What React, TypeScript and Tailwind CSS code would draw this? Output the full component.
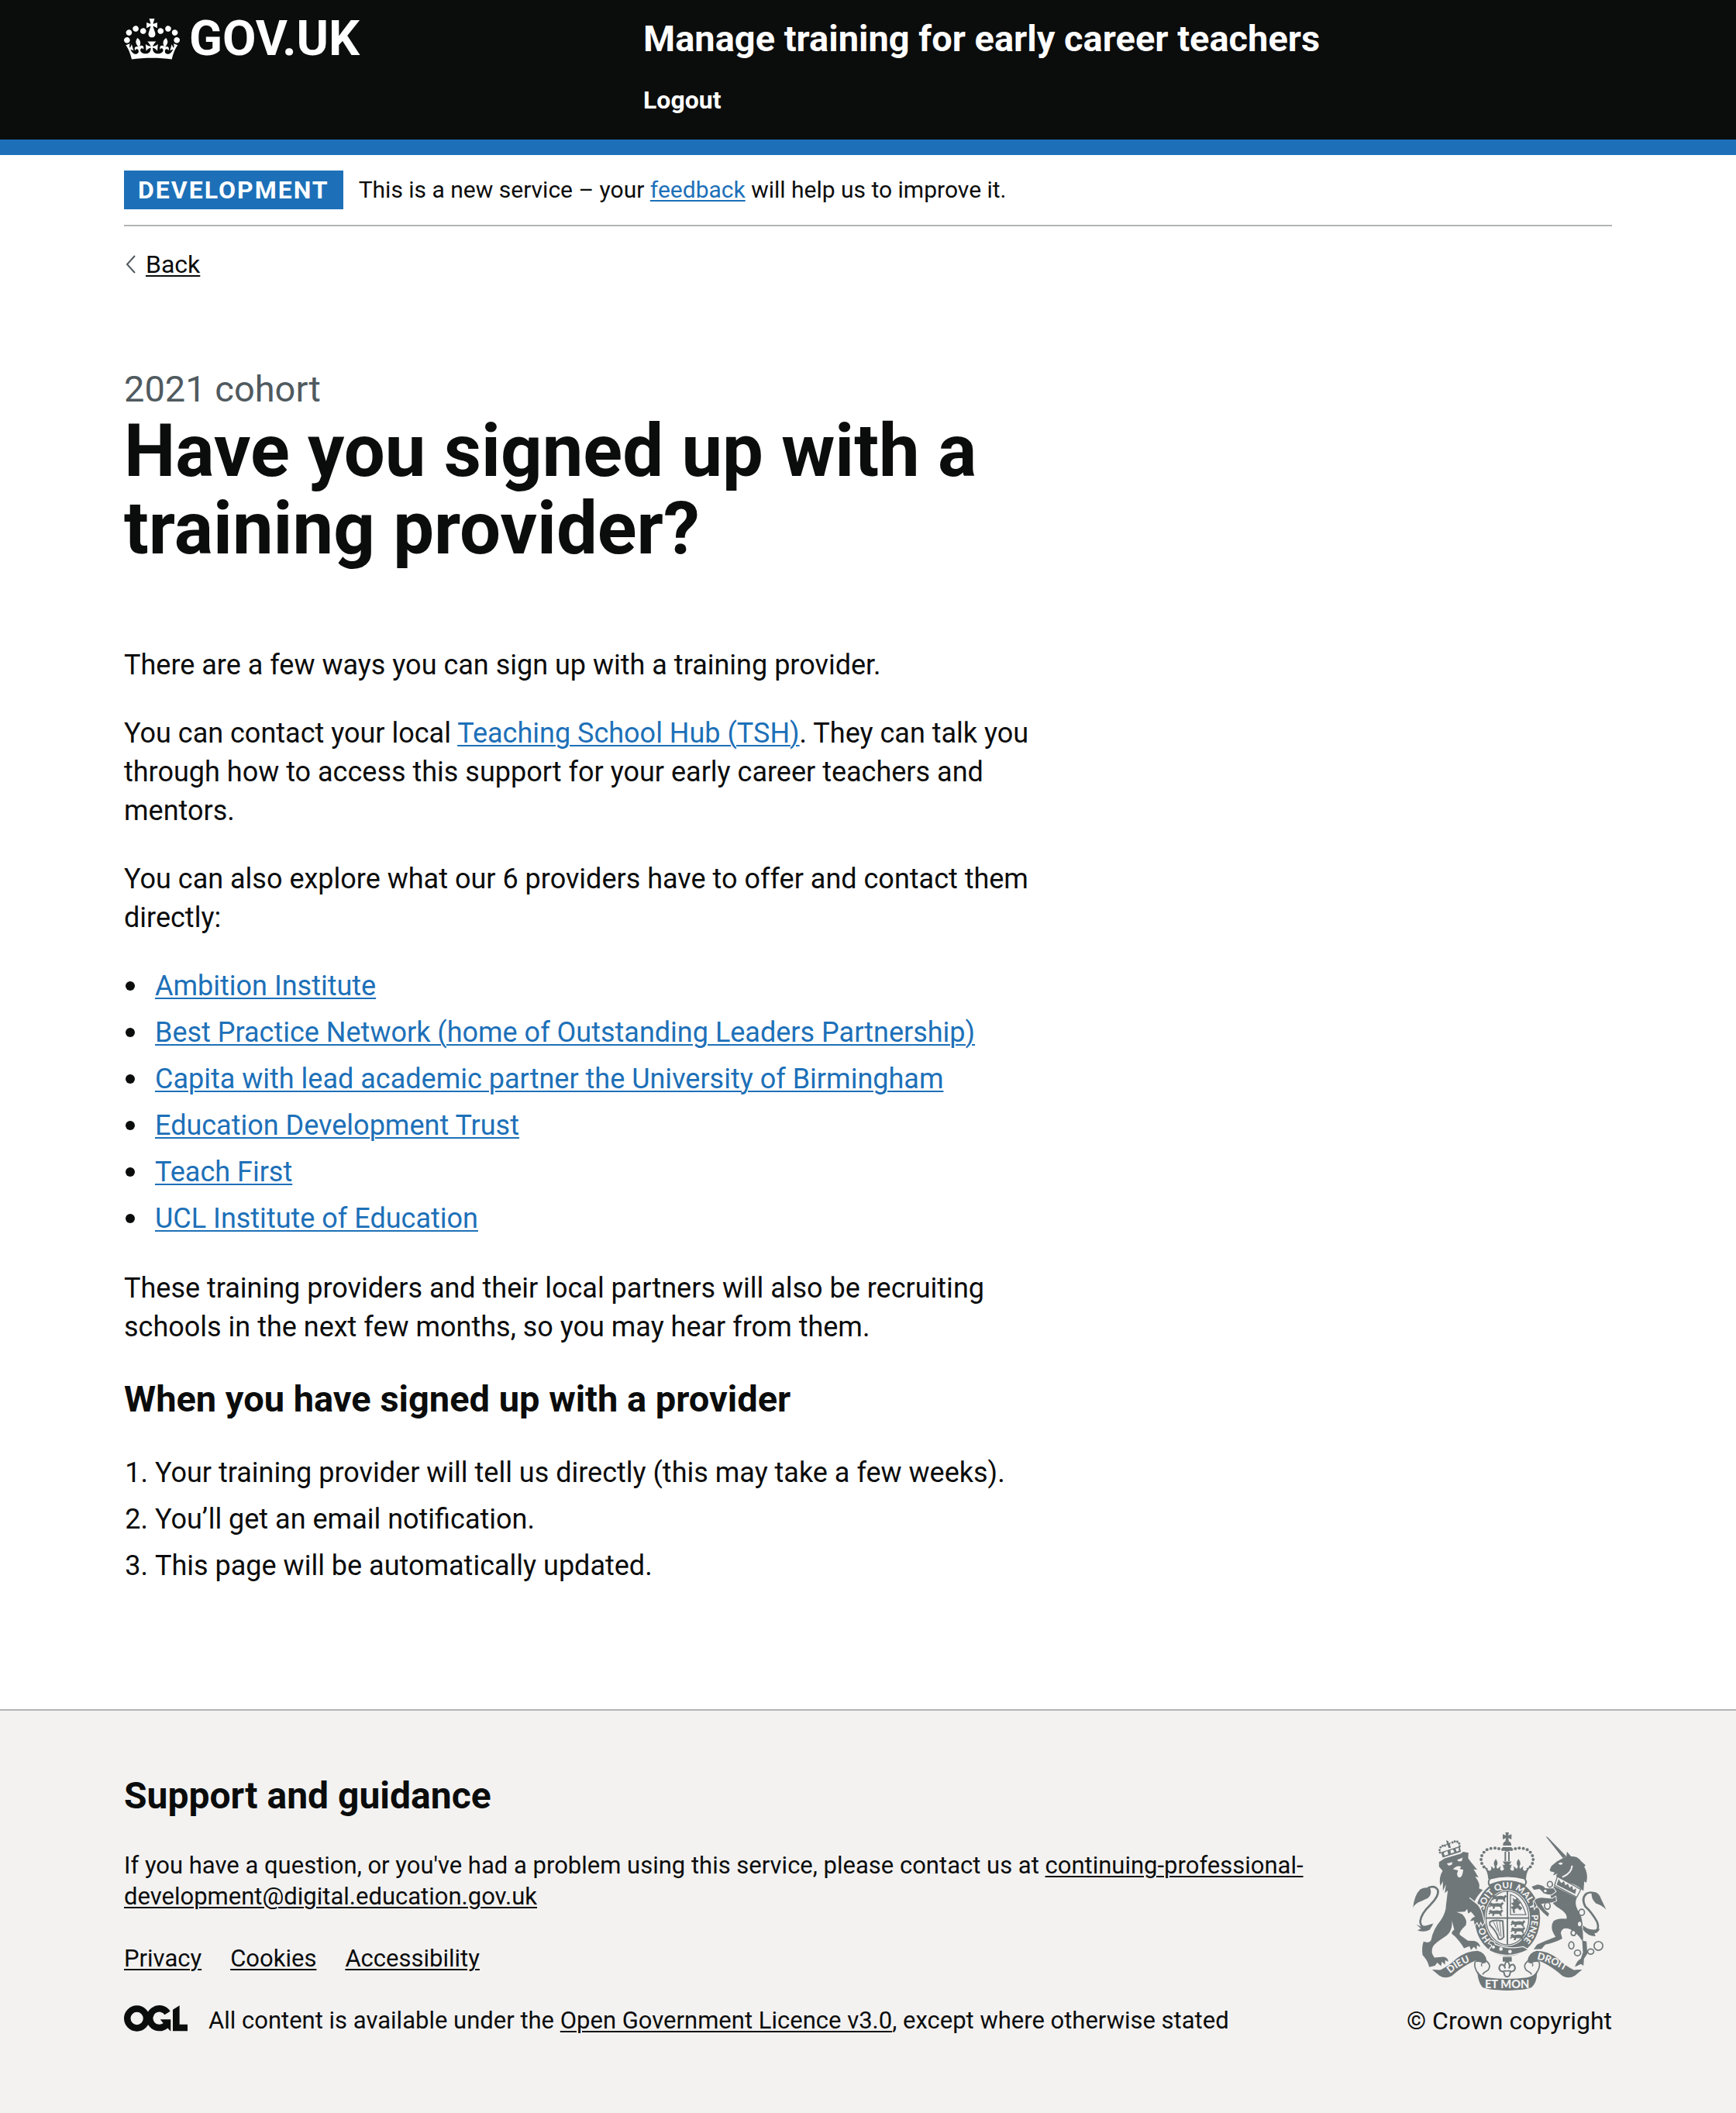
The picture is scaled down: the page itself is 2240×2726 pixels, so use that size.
import type { ReactNode } from "react";

const providers = [
  "Ambition Institute",
  "Best Practice Network (home of Outstanding Leaders Partnership)",
  "Capita with lead academic partner the University of Birmingham",
  "Education Development Trust",
  "Teach First",
  "UCL Institute of Education",
];

const steps = [
  "Your training provider will tell us directly (this may take a few weeks).",
  "You’ll get an email notification.",
  "This page will be automatically updated.",
];

const footerLinks = ["Privacy", "Cookies", "Accessibility"];

const INK = "#6f7779";
const PAPER = "#f3f2f1";

function TextLink({ children, dark = false }: { children: ReactNode; dark?: boolean }) {
  return (
    <a
      href="#"
      className={
        dark
          ? "text-[#0b0c0c] underline decoration-2 underline-offset-[3px]"
          : "text-[#1d70b8] underline decoration-2 underline-offset-[3px]"
      }
    >
      {children}
    </a>
  );
}

function CrownLogo() {
  return (
    <svg aria-hidden="true" className="h-[53px] w-[72px]" viewBox="0 0 132 97" fill="currentColor">
      <path
        fillRule="evenodd"
        d="M25 30.2c3.5 1.5 7.7-.2 9.1-3.7 1.5-3.6-.2-7.8-3.9-9.2-3.6-1.4-7.6.3-9.1 3.9-1.4 3.5.3 7.5 3.9 9zM9 39.5c3.6 1.5 7.8-.2 9.2-3.7 1.5-3.6-.2-7.8-3.9-9.1-3.6-1.5-7.6.2-9.1 3.8-1.4 3.5.3 7.5 3.8 9zM4.4 57.2c3.5 1.5 7.7-.2 9.1-3.8 1.5-3.6-.2-7.7-3.9-9.1-3.5-1.5-7.6.3-9.1 3.8-1.4 3.5.3 7.6 3.9 9.1zm38.3-21.4c3.5 1.5 7.7-.2 9.1-3.8 1.5-3.6-.2-7.7-3.9-9.1-3.6-1.5-7.6.3-9.1 3.8-1.3 3.6.4 7.7 3.9 9.1zm64.4-5.6c-3.6 1.5-7.8-.2-9.1-3.7-1.5-3.6.2-7.8 3.8-9.2 3.6-1.4 7.7.3 9.2 3.9 1.3 3.5-.4 7.5-3.9 9zm15.9 9.3c-3.6 1.5-7.7-.2-9.1-3.7-1.5-3.6.2-7.8 3.7-9.1 3.6-1.5 7.7.2 9.2 3.8 1.5 3.5-.3 7.5-3.8 9zm4.7 17.7c-3.6 1.5-7.8-.2-9.2-3.8-1.5-3.6.2-7.7 3.9-9.1 3.6-1.5 7.7.3 9.2 3.8 1.3 3.5-.4 7.6-3.9 9.1zM89.3 35.8c-3.6 1.5-7.8-.2-9.2-3.8-1.4-3.6.2-7.7 3.9-9.1 3.6-1.5 7.7.3 9.2 3.8 1.4 3.6-.3 7.7-3.9 9.1zM69.7 17.7l8.9 4.7V9.3l-8.9 2.8c-.2-.3-.5-.6-.9-.9L72.4 0H59.6l3.5 11.2c-.3.3-.6.5-.9.9l-8.8-2.8v13.1l8.8-4.7c.3.3.6.7.9.9l-5 15.4v.1c-.2.8-.4 1.6-.4 2.4 0 4.1 3.1 7.5 7 8.1h.2c.3 0 .7.1 1 .1.4 0 .7 0 1-.1h.2c4-.6 7.1-4.1 7.1-8.1 0-.8-.1-1.7-.4-2.4V34l-5.1-15.4c.4-.2.7-.6 1-.9zM66 92.8c16.9 0 32.8 1.1 47.1 3.2 4-16.9 8.9-26.7 14-33.5l-9.6-3.4c1 4.9 1.1 7.2 0 10.2-1.5-1.4-3-4.3-4.2-8.7L108.6 76c2.8-2 5-3.2 7.5-3.3-4.4 9.4-10 11.9-13.6 11.2-4.3-.8-6.3-4.6-5.6-7.9 1-4.7 5.7-5.9 8-.5 4.3-8.7-3-11.4-7.6-8.8 7.1-7.2 7.9-13.5 2.1-21.1-8 6.1-8.1 12.3-4.5 20.8-4.7-5.4-12.1-2.5-9.5 6.2 3.4-5.2 7.9-2 7.2 3.1-.6 4.3-6.4 7.8-13.5 7.2-10.3-.9-10.9-8-11.2-13.8 2.5-.5 7.1 1.8 11 7.3L80.2 60c-4.1 4.4-8 5.3-12.3 5.4 1.4-4.4 8-11.6 8-11.6H55.5s6.4 7.2 7.9 11.6c-4.2-.1-8-1-12.3-5.4l1.4 16.4c3.9-5.5 8.5-7.7 10.9-7.3-.3 5.8-.9 12.8-11.1 13.8-7.2.6-12.9-2.9-13.5-7.2-.7-5 3.8-8.3 7.1-3.1 2.7-8.7-4.6-11.6-9.4-6.2 3.7-8.5 3.6-14.7-4.6-20.8-5.8 7.6-5 13.9 2.2 21.1-4.7-2.6-11.9.1-7.7 8.8 2.3-5.5 7.1-4.2 8.1.5.7 3.3-1.3 7.1-5.7 7.9-3.5.7-9-1.8-13.5-11.2 2.5.1 4.7 1.3 7.5 3.3l-4.7-15.4c-1.2 4.4-2.7 7.2-4.3 8.7-1.1-3-.9-5.3 0-10.2l-9.5 3.4c5 6.9 9.9 16.7 14 33.5 14.8-2.1 30.8-3.2 47.7-3.2z"
      />
    </svg>
  );
}

/* Licence mark: a ring, an open ring with a spur, and an angled corner. */
function LicenceMark() {
  return (
    <svg role="img" aria-label="OGL" className="h-[34px] w-[82px] shrink-0" viewBox="0 0 483 196">
      <g fill="none" stroke="currentColor" strokeWidth="50">
        <circle cx="98" cy="98" r="73" />
        <path d="M330 57A73 73 0 1 0 318 150" />
      </g>
      <path fill="currentColor" d="M275 106h80v88h-3l-60-68zM371 32L422 0v143h61v51H371z" />
    </svg>
  );
}

const crownBeads = [
  [420, 131], [405, 128], [390, 126], [374, 127], [359, 132], [347, 142],
  [339, 155], [336, 170], [339, 185], [347, 199],
];

function CrestCrown() {
  const half = (
    <>
      {crownBeads.map(([x, y]) => (
        <circle key={`${x}-${y}`} cx={x} cy={y} r="6" />
      ))}
      <path d="M438 238Q400 236 364 246Q362 214 346 198L362 204Q358 214 372 214Q380 204 372 196Q382 200 386 206Q392 200 386 190Q384 180 393 168Q402 180 399 190Q392 200 400 206Q406 200 414 196Q406 208 414 214Q428 212 424 200L418 190L438 194Z" />
    </>
  );
  return (
    <g fill={INK}>
      {half}
      <g transform="translate(874 0) scale(-1 1)">{half}</g>
      <path d="M430 65h14l-3 12 13-5v20l-13-5 3 12h-14l3-12-13 5v-20l13 5z" />
      <path d="M421 112a16 14 0 0 1 32 0v4h-32zM419 122h36v6q-6 11-18 11t-18-11z" />
      <path d="M427 140h6v36h-6zM441 140h6v36h-6zM420 178h34l-8 12 8 12h-34l8-12z" />
      <path
        d="M372 244Q437 226 504 244Q516 256 506 270Q437 238 368 270Q360 256 372 244Z"
        fill={PAPER}
        stroke={INK}
        strokeWidth="6"
      />
    </g>
  );
}

function CrestLion() {
  return (
    <g transform="translate(45 30)" fill={INK}>
      <path
        stroke={PAPER}
        strokeWidth="7"
        paintOrder="stroke"
        d="M128 150L150 136L212 118L222 110L242 114L241 135L250 148L276 180L262 178L281 209L268 206Q290 235 283 252L298 258Q276 280 266 302Q288 325 295 352L303 385L296 394L290 380L283 397L276 382L266 394L263 376L249 379Q254 366 268 362L252 342L241 350L237 332L228 342L196 344L218 352Q240 375 232 395Q205 420 208 432L240 455L265 456Q286 462 288 480L275 472L274 490L263 478L252 491L246 476L225 484L216 470Q195 440 180 430Q172 424 187 412L178 376Q182 420 150 440Q110 466 104 478Q94 500 110 520L145 517Q165 520 163 537L152 530L151 548L139 536L136 553L121 540L112 552L90 557Q84 535 76 525L64 510Q60 480 68 458L82 462Q96 460 98 450Q105 410 135 375Q155 345 155 318L162 260L150 270L155 236L143 262L143 225L133 242Q126 210 142 184L128 168Z"
      />
      <path d="M100 395Q58 415 55 380Q58 350 95 315Q130 280 123 258Q112 238 85 250" fill="none" stroke={INK} strokeWidth="8" />
      <path d="M27 328Q32 278 55 256Q75 245 94 252Q102 275 85 290Q60 302 45 308Q30 318 27 328ZM40 392L58 400L78 396L106 388L92 412Q70 425 44 414L58 408Z" />
      <path d="M136 112L208 88L213 110L142 133Z" />
      <path d="M146 115L160 106L164 120L150 125ZM172 104L182 101L188 112L174 117ZM192 98L204 95L205 106L196 109Z" fill={PAPER} />
      {[[132, 113], [130, 103], [134, 93], [142, 87], [151, 86], [180, 74], [189, 70], [199, 71], [206, 78], [208, 88]].map(([x, y]) => (
        <circle key={`${x}-${y}`} cx={x} cy={y} r="4.5" />
      ))}
      <path d="M155 66l8 2 3 8 8-2-4 8 4 12-9 2-4-12-8 0 6-6z" />
      <path d="M158 156L180 150L178 160L166 164ZM198 142L220 133L216 146L204 148ZM182 178Q198 160 214 168L208 176L222 180Q218 210 208 210Q198 208 198 194L202 182Z" fill={PAPER} />
      <path d="M246 288L292 325" stroke={PAPER} strokeWidth="4" />
    </g>
  );
}

function CrestUnicorn() {
  return (
    <g transform="translate(435 30)" fill={INK}>
      <path d="M152 51L159 53L232 128L218 134Z" />
      <path d="M167 180L174 165L195 148L222 133L232 128L234 109L250 128Q275 126 290 148L306 162L301 168Q318 198 309 230L301 225L298 262Q270 235 240 230L210 217L194 208Q190 200 198 194L180 202L186 190L170 186Z" />
      <path d="M200 156q8-8 18-2l-4 6q-8 2-14-4z" fill={PAPER} />
      <path d="M216 208Q252 194 254 164" fill="none" stroke={PAPER} strokeWidth="6" />
      <path d="M184 243L272 288Q262 310 275 335Q297 365 292 400Q298 425 296 455L310 458L313 505L300 525L298 552L288 545L265 556Q270 535 288 524L296 500L293 455Q270 420 245 410Q215 400 210 425L216 447Q190 462 150 470L135 487L105 488L118 470L145 458L190 440Q165 405 182 378Q200 366 232 370Q238 350 205 330Q180 315 175 300L168 270Z" />
      <path
        stroke={PAPER}
        strokeWidth="6"
        paintOrder="stroke"
        d="M182 252L150 252Q145 240 120 237L97 245L106 257L128 254Q148 278 174 276L190 264ZM190 284L178 292L135 288Q112 290 108 300L120 322L142 346L160 362L165 350L148 335L134 312L176 306L192 300ZM104 300L108 330L116 318Z"
      />
      <path d="M325 425Q366 420 350 380Q330 345 305 322Q288 290 310 272Q330 262 345 276" fill="none" stroke={INK} strokeWidth="8" />
      <path d="M330 266Q356 262 366 292L386 334Q370 318 346 310Q326 292 330 266ZM296 395Q320 420 362 408Q350 430 340 424L345 438Q315 438 296 412Z" />
      <path d="M197 206L288 256L272 286L186 240Z" fill={PAPER} stroke={INK} strokeWidth="4" />
      <path d="M194 238L202 216L212 232L222 224L228 240L238 234L244 250L254 242L258 258L270 252L266 274Z" />
      <g fill={PAPER} stroke={INK} strokeWidth="5">
        <ellipse cx="168" cy="236" rx="10" ry="11" />
        <ellipse cx="150" cy="262" rx="8" ry="8" />
        <ellipse cx="158" cy="320" rx="11" ry="13" />
        <ellipse cx="291" cy="345" rx="11" ry="12" />
        <ellipse cx="283" cy="390" rx="9" ry="11" />
        <ellipse cx="259" cy="425" rx="9" ry="10" />
        <ellipse cx="251" cy="473" rx="10" ry="14" />
        <ellipse cx="275" cy="502" rx="12" ry="11" />
        <ellipse cx="326" cy="497" rx="12" ry="10" />
        <ellipse cx="356" cy="475" rx="17" ry="17" />
      </g>
    </g>
  );
}

function SmallLion({ x, y }: { x: number; y: number }) {
  return (
    <path
      transform={`translate(${x} ${y})`}
      d="M0 8l6-8 8 5 18-2 12 2 6-6 6 6-6 6-2 8 4 6h-7l-5-8H22l-2 8h-8l3-8-9-2-4 5-4-4 5-4z"
      fill={INK}
    />
  );
}

function CrestShield() {
  return (
    <g>
      <ellipse cx="438" cy="397" rx="132" ry="152" fill={PAPER} />
      <ellipse cx="438" cy="397" rx="127" ry="148" fill={INK} />
      <ellipse cx="438" cy="397" rx="88" ry="109" fill={PAPER} />
      <ellipse cx="438" cy="397" rx="83" ry="104" fill="none" stroke={INK} strokeWidth="4" />
      <path d="M438 292V500M356 397H520" stroke={INK} strokeWidth="6" />
      <SmallLion x={380} y={308} />
      <SmallLion x={368} y={336} />
      <SmallLion x={366} y={364} />
      <SmallLion x={452} y={406} />
      <SmallLion x={452} y={432} />
      <SmallLion x={450} y={458} />
      <path d="M450 306Q490 316 510 384H450Z" fill="none" stroke={INK} strokeWidth="4" />
      <path d="M458 318l10 8 8-8 4 12 10 8-8 8 14 12-8 10-12-10-10 6 2 14-8-2-2-14-8-6 12-6-10-10 10-4z" fill={INK} />
      <path d="M370 412Q384 402 420 408L424 470Q414 484 404 478Q398 450 370 424Z" fill="none" stroke={INK} strokeWidth="6" />
      <path d="M384 412L400 446M396 410L408 466M408 410L414 470" stroke={INK} strokeWidth="3" />
      <path id="garter" d="M438 512A94 115 0 0 1 438 282A94 115 0 0 1 438 512" fill="none" />
      <g fill={PAPER} fontFamily="Lato, sans-serif" fontWeight="900" fontSize="35" textAnchor="middle">
        <text><textPath href="#garter" startOffset="102">HO</textPath></text>
        <text><textPath href="#garter" startOffset="234">SOIT</textPath></text>
        <text><textPath href="#garter" startOffset="314">QUI</textPath></text>
        <text><textPath href="#garter" startOffset="396">MAL</textPath></text>
        <text><textPath href="#garter" startOffset="450">Y</textPath></text>
        <text><textPath href="#garter" startOffset="534">PENSE</textPath></text>
      </g>
      <path d="M372 484Q392 490 390 498Q440 520 500 508L520 520Q440 560 372 526Q362 520 374 510Q384 500 364 496Z" fill={INK} stroke={PAPER} strokeWidth="4" />
      <circle cx="384" cy="510" r="6" fill={PAPER} />
      <circle cx="413" cy="517" r="7" fill={PAPER} />
      <circle cx="448" cy="527" r="7" fill={PAPER} />
    </g>
  );
}

function CrestRibbon() {
  const side = (
    <>
      <path d="M146 597L178 598Q210 584 240 555Q280 524 322 524Q352 530 358 562L352 572L314 562Q268 580 222 622Q196 634 174 620Z" fill={INK} />
      <path d="M352 560Q380 580 362 600Q346 608 342 616M314 564Q304 590 332 622" fill="none" stroke={INK} strokeWidth="5" />
      <path d="M316 566Q330 562 345 570Q332 574 340 584" fill="none" stroke={INK} strokeWidth="4" />
    </>
  );
  return (
    <g>
      {side}
      <g transform="translate(874 0) scale(-1 1)">{side}</g>
      <path d="M322 602Q334 624 360 628Q437 638 514 628Q544 622 552 602Q556 640 534 664Q520 676 437 678Q354 676 340 664Q322 640 322 602Z" fill={INK} />
      <path id="ribbon-left" d="M216 612Q262 572 318 558" fill="none" />
      <path id="ribbon-right" d="M552 557Q612 568 684 616" fill="none" />
      <g fill={PAPER} fontFamily="Lato, sans-serif" fontWeight="900" fontSize="38">
        <text><textPath href="#ribbon-left">DIEU</textPath></text>
        <text><textPath href="#ribbon-right">DROIT</textPath></text>
        <text x="437" y="668" fontSize="44" textAnchor="middle">ET MON</text>
      </g>
      <path d="M420 548h35v18h-35z" fill={INK} />
      <path d="M437 562Q452 578 444 592Q450 574 462 578Q474 590 462 602L450 606L446 620Q437 630 428 620L424 606L412 602Q400 590 412 578Q424 574 430 592Q422 578 437 562Z" fill={PAPER} stroke={INK} strokeWidth="6" />
      <path d="M422 602H452" stroke={INK} strokeWidth="5" />
    </g>
  );
}

function RoyalArms() {
  return (
    <svg aria-hidden="true" className="h-[204px] w-[250px]" viewBox="72 65 750 613">
      <CrestShield />
      <CrestCrown />
      <CrestLion />
      <CrestUnicorn />
      <CrestRibbon />
    </svg>
  );
}

export default function App() {
  return (
    <div className="min-h-screen bg-white font-[Roboto,sans-serif] text-[#0b0c0c]">
      <header className="border-b-[20px] border-[#1d70b8] bg-[#0b0c0c] text-white">
        <div className="mx-40 flex h-[180px] items-start pt-5">
          <div className="w-[670px] shrink-0">
            <a href="#" className="inline-flex h-[60px] items-center gap-3 text-[63px] leading-[60px] font-bold">
              <CrownLogo />
              GOV.UK
            </a>
          </div>
          <div>
            <a href="#" className="block text-[47px] leading-[60px] font-bold">
              Manage training for early career teachers
            </a>
            <nav aria-label="Account" className="mt-[29px]">
              <a href="#" className="text-[32px] leading-10 font-bold">
                Logout
              </a>
            </nav>
          </div>
        </div>
      </header>

      <div className="mx-40">
        <div className="flex items-center gap-5 border-b-2 border-[#b1b4b6] py-5">
          <strong className="flex h-[50px] items-center bg-[#1d70b8] px-[18px] text-[32px] leading-10 font-bold tracking-[2px] text-white uppercase">
            Development
          </strong>
          <span className="text-[30px] leading-10">
            This is a new service – your <TextLink>feedback</TextLink> will help us to improve it.
          </span>
        </div>

        <div className="mt-[29px] flex items-center gap-3 text-[32px] leading-10">
          <svg aria-hidden="true" className="h-6 w-4" viewBox="0 0 16 24" fill="none" stroke="#505a5f" strokeWidth="2">
            <path d="M14 1L4 12l10 11" />
          </svg>
          <TextLink dark>Back</TextLink>
        </div>

        <main className="mt-[111px] max-w-[1220px]">
          <span className="block text-[47px] leading-[60px] text-[#505a5f]">2021 cohort</span>
          <h1 className="text-[94px] leading-[100px] font-bold">Have you signed up with a training provider?</h1>

          <div className="mt-[101px] flex flex-col gap-[38px] text-[36px] leading-[50px]">
            <p>There are a few ways you can sign up with a training provider.</p>
            <p>
              You can contact your local <TextLink>Teaching School Hub (TSH)</TextLink>. They can talk you through how to
              access this support for your early career teachers and mentors.
            </p>
            <p>You can also explore what our 6 providers have to offer and contact them directly:</p>
            <ul className="mb-0.5 flex flex-col gap-[10px]">
              {providers.map((name) => (
                <li
                  key={name}
                  className="flex items-center gap-[26px] pl-0.5 before:size-3 before:shrink-0 before:rounded-full before:bg-[#0b0c0c] before:content-['']"
                >
                  <TextLink>{name}</TextLink>
                </li>
              ))}
            </ul>
            <p>
              These training providers and their local partners will also be recruiting schools in the next few months,
              so you may hear from them.
            </p>
            <h2 className="mb-0.5 text-[47px] leading-[60px] font-bold">When you have signed up with a provider</h2>
            <ol className="flex list-decimal flex-col gap-[10px] pl-10">
              {steps.map((step) => (
                <li key={step}>{step}</li>
              ))}
            </ol>
          </div>
        </main>
      </div>

      <footer className="mt-40 border-t-2 border-[#b1b4b6] bg-[#f3f2f1] pt-20 pb-[100px] text-[31px] leading-10">
        <div className="mx-40 flex items-end justify-between">
          <div className="flex max-w-[1560px] flex-col gap-10">
            <div className="flex flex-col gap-10">
              <h2 className="text-[48px] leading-[60px] font-bold">Support and guidance</h2>
              <p>
                If you have a question, or you've had a problem using this service, please contact us at{" "}
                <TextLink dark>continuing-professional-development@digital.education.gov.uk</TextLink>
              </p>
            </div>
            <ul className="flex gap-[37px]">
              {footerLinks.map((label) => (
                <li key={label}>
                  <TextLink dark>{label}</TextLink>
                </li>
              ))}
            </ul>
            <div className="flex gap-[27px]">
              <LicenceMark />
              <span>
                All content is available under the <TextLink dark>Open Government Licence v3.0</TextLink>, except where
                otherwise stated
              </span>
            </div>
          </div>
          <a href="#" className="flex shrink-0 flex-col items-center gap-[19px] text-[32px]">
            <RoyalArms />
            <span className="leading-10">© Crown copyright</span>
          </a>
        </div>
      </footer>
    </div>
  );
}
